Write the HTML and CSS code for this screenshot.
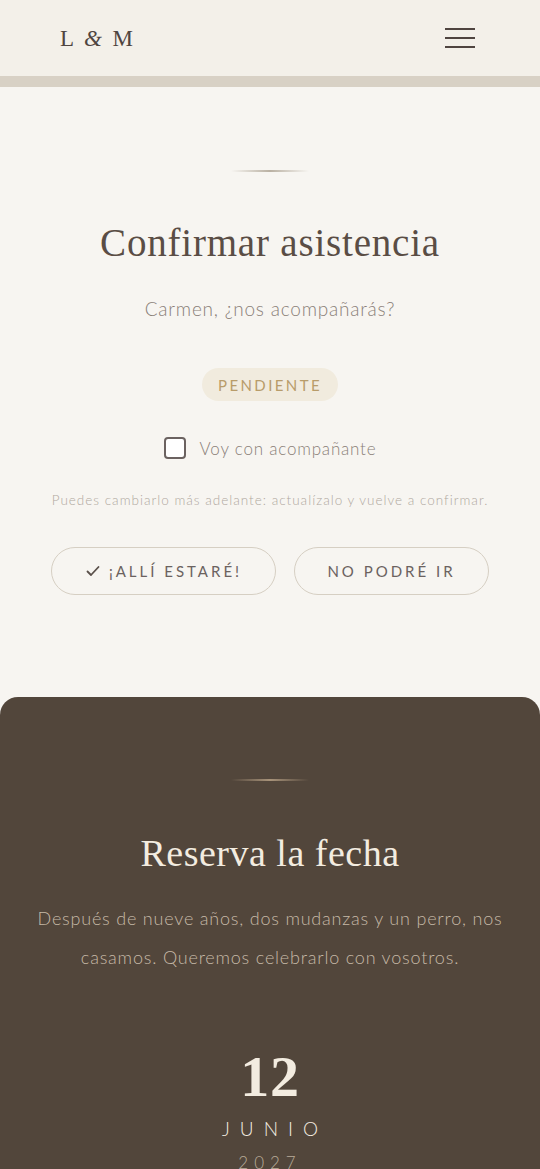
FILE: index.html
```html
<!DOCTYPE html>
<html lang="es">
<head>
  <meta charset="utf-8">
  <link rel="stylesheet" href="styles.css">
</head>
<body>
  <header class="topbar">
    <div class="logo">L <span class="amp">&amp;</span> M</div>
    <button class="menu-btn" type="button" aria-label="Menú">
      <span></span><span></span><span></span>
    </button>
  </header>
  <div class="topbar-band"></div>

  <section class="rsvp">
    <div class="divider"></div>
    <h1 class="title">Confirmar asistencia</h1>
    <p class="subtitle">Carmen, ¿nos acompañarás?</p>

    <span class="badge">PENDIENTE</span>

    <label class="plus-one">
      <input type="checkbox" class="plus-one-box">
      <span>Voy con acompañante</span>
    </label>

    <p class="note">Puedes cambiarlo más adelante: actualízalo y vuelve a confirmar.</p>

    <div class="actions">
      <button class="pill pill-yes" type="button">
        <svg width="16" height="16" viewBox="0 0 16 16" fill="none"><path d="M2.5 8.5l3.5 3.5 7.5-8" stroke="#5a504a" stroke-width="1.8" stroke-linecap="round" stroke-linejoin="round"/></svg>
        ¡ALLÍ ESTARÉ!
      </button>
      <button class="pill pill-no" type="button">NO PODRÉ IR</button>
    </div>
  </section>

  <section class="save-date">
    <div class="divider divider-light"></div>
    <h2 class="title title-light">Reserva la fecha</h2>
    <p class="intro">Después de nueve años, dos mudanzas y un perro, nos casamos. Queremos celebrarlo con vosotros.</p>

    <div class="date">
      <div class="day">12</div>
      <div class="month">JUNIO</div>
      <div class="year">2027</div>
    </div>
  </section>
</body>
</html>
```

FILE: styles.css
```css
body {
  margin: 0;
  background-color: #f7f5f1;
  font-family: Lato, "Open Sans", sans-serif;
  font-weight: 300;
  letter-spacing: 0.8px;
  color: #5a4d45;
}

/* top bar */
.topbar {
  height: 76px;
  background-color: #f3f0e9;
  display: flex;
  align-items: center;
  justify-content: space-between;
  padding: 0 65px 0 60px;
}
.topbar-band {
  height: 11px;
  background-color: #d8d1c5;
}
.logo {
  font-family: "Liberation Serif", serif;
  font-size: 23px;
  letter-spacing: 1px;
  word-spacing: 3px;
  color: #4f4540;
  margin-top: 1px;
}
.amp {
  font-style: italic;
}
.menu-btn {
  background: none;
  border: none;
  padding: 0;
  width: 30px;
  display: flex;
  flex-direction: column;
  gap: 7px;
  cursor: pointer;
}
.menu-btn span {
  display: block;
  height: 2px;
  background-color: #4f4540;
}

/* shared */
.divider {
  width: 78px;
  height: 2px;
  margin: 0 auto;
  background: linear-gradient(to right, rgba(180,170,155,0), #b9b0a2, rgba(180,170,155,0));
}
.divider-light {
  background: linear-gradient(to right, rgba(200,185,160,0), #a8937a, rgba(200,185,160,0));
}
.title {
  font-family: "Liberation Serif", serif;
  font-weight: 400;
  font-size: 38px;
  letter-spacing: 0.5px;
  margin: 0;
  color: #5a4d45;
}
.title-light {
  color: #f3ece0;
}

/* rsvp */
.rsvp {
  text-align: center;
  padding: 83px 0 102px;
}
.rsvp .title {
  margin-top: 48px;
  font-size: 39px;
  letter-spacing: 0.8px;
}
.subtitle {
  font-size: 19px;
  color: #8a7f78;
  margin: 32px 0 0;
}
.badge {
  display: inline-block;
  margin-top: 48px;
  padding: 8px 16px 7px;
  background-color: #f1ebde;
  border-radius: 18px;
  color: #b89c6a;
  font-weight: 400;
  font-size: 15px;
  letter-spacing: 2.4px;
}
.plus-one {
  display: flex;
  align-items: center;
  justify-content: center;
  gap: 14px;
  margin-top: 36px;
  font-size: 17px;
  color: #8a7f78;
}
.plus-one-box {
  appearance: none;
  margin: 0;
  width: 22px;
  height: 22px;
  border: 2px solid #6b6260;
  border-radius: 4px;
  background-color: #fff;
}
.note {
  font-size: 13.5px;
  letter-spacing: 1px;
  color: #b0a8a0;
  margin: 33px 0 0;
}
.actions {
  display: flex;
  justify-content: center;
  gap: 18px;
  margin-top: 39px;
}
.pill {
  height: 48px;
  border: 1.5px solid #d6cfc3;
  border-radius: 24px;
  background: transparent;
  font-family: Lato, "Open Sans", sans-serif;
  font-weight: 400;
  font-size: 15px;
  letter-spacing: 3px;
  color: #6b6260;
  display: flex;
  align-items: center;
  justify-content: center;
  gap: 8px;
}
.pill-yes {
  width: 225px;
}
.pill-no {
  width: 195px;
}

/* save the date */
.save-date {
  background-color: #52463b;
  border-radius: 18px 18px 0 0;
  text-align: center;
  padding: 82px 0 40px;
}
.save-date .title {
  margin-top: 50px;
}
.intro {
  font-size: 18px;
  line-height: 39px;
  color: #c6b9a7;
  margin: 24px 30px 0;
}
.date {
  margin-top: 68px;
  color: #f3ece0;
}
.day {
  font-family: "Liberation Serif", serif;
  font-weight: 700;
  font-size: 58px;
  line-height: 64px;
}
.month {
  font-size: 19px;
  letter-spacing: 10px;
  margin-top: 8px;
  margin-right: -10px;
}
.year {
  font-size: 17px;
  letter-spacing: 6px;
  margin-top: 12px;
  color: #b8ab99;
}
```
